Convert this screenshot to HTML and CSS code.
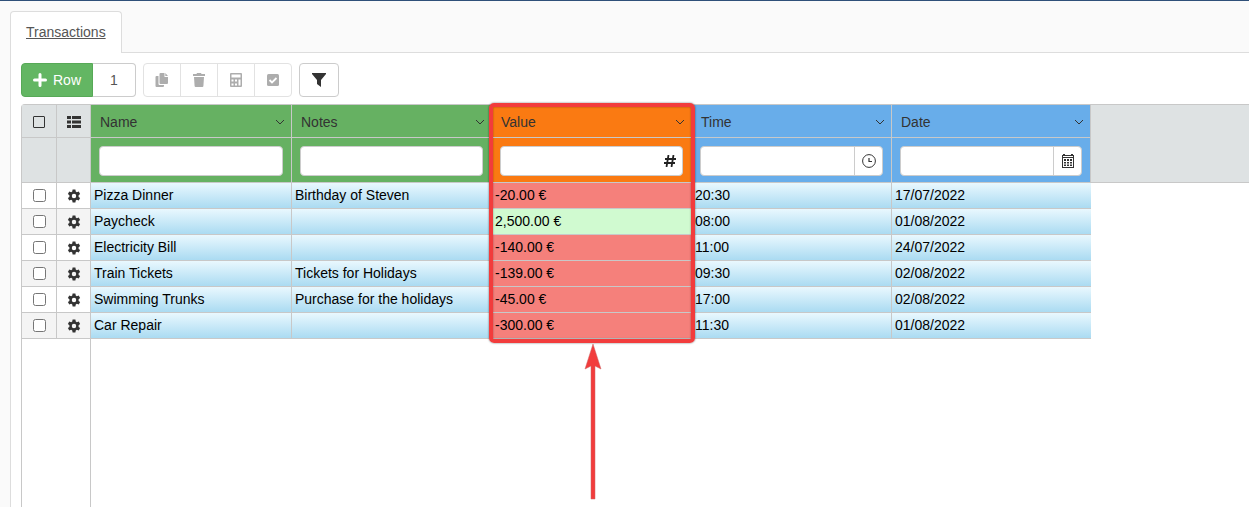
FILE: index.html
```html
<!DOCTYPE html>
<html lang="en">
<head>
  <meta charset="UTF-8">
  <title>Transactions</title>
  <link rel="stylesheet" href="styles.css">
</head>
<body>
  <svg class="defs" width="0" height="0">
    <symbol id="gear" viewBox="0 0 24 24">
      <path d="M9.600 1h4.800l.6 3.300 1.900 1.100 3.200-1.200 2.400 4.200-2.600 2.100v3l2.600 2.100-2.400 4.200-3.200-1.200-1.900 1.100-.6 3.300H9.600l-.6-3.300-1.900-1.100-3.200 1.200-2.400-4.200 2.600-2.100v-3L1.500 8.400l2.400-4.200 3.200 1.200L9 4.300zM12 8.200a3.800 3.800 0 1 0 0 7.600 3.800 3.800 0 0 0 0-7.600z" fill-rule="evenodd"/>
    </symbol>
    <symbol id="chevron" viewBox="0 0 10 6">
      <path d="M1 1l4 4 4-4" fill="none" stroke="currentColor"/>
    </symbol>
  </svg>

  <nav class="tabs">
    <a class="tab" href="#transactions">Transactions</a>
  </nav>

  <main class="panel" id="transactions">
    <div class="toolbar">
      <div class="group">
        <button class="btn add">
          <svg width="14" height="14" viewBox="0 0 14 14"><path d="M7 1.500v11M1.500 7h11" stroke="#fff" stroke-width="3" stroke-linecap="round"/></svg>
          Row
        </button>
        <input class="count" type="text" value="1" aria-label="Number of rows">
      </div>
      <div class="group">
        <button class="btn" disabled aria-label="Copy">
          <svg width="14" height="14" viewBox="0 0 14 14"><path d="M5.500 0H9.500v4H13v6q0 1-1 1H5.500q-1 0-1-1V1q0-1 1-1zM10.300 0L13 3h-2.700zM1.500 3h2v8q0 1 1 1H9v1q0 1-1 1H1.500q-1 0-1-1V4q0-1 1-1z"/></svg>
        </button>
        <button class="btn" disabled aria-label="Delete">
          <svg width="14" height="14" viewBox="0 0 14 14"><path d="M1 1h3.500l.5-1h4l.5 1H13v2H1zM2 4h10l-.6 9q-.1 1-1 1H3.600q-.9 0-1-1z"/></svg>
        </button>
        <button class="btn" disabled aria-label="Calculate">
          <svg width="14" height="14" viewBox="0 0 14 14"><path d="M2 0h10q1 0 1 1v12q0 1-1 1H2q-1 0-1-1V1q0-1 1-1zM2.500 1.500v3h9v-3zM2.500 6.500v2h2v-2zM6 6.500v2h2v-2zM9.500 6.500v6h2v-6zM2.500 10.500v2h2v-2zM6 10.500v2h2v-2z" fill-rule="evenodd"/></svg>
        </button>
        <button class="btn" disabled aria-label="Select">
          <svg width="14" height="14" viewBox="0 0 14 14"><rect x="1" y="1" width="12" height="12" rx="1.500"/><path d="M3.500 7l2.500 2.500L10.500 5" fill="none" stroke="#fff" stroke-width="1.800"/></svg>
        </button>
      </div>
      <div class="group">
        <button class="btn" aria-label="Filter">
          <svg width="14" height="14" viewBox="0 0 14 14"><path d="M0 0h14v1L9 7v7l-4-3V7L0 1z"/></svg>
        </button>
      </div>
    </div>

    <div class="grid">
      <table>
        <colgroup>
          <col class="col-check">
          <col class="col-gear">
          <col class="col-name">
          <col class="col-data">
          <col class="col-data">
          <col class="col-data">
          <col class="col-date">
          <col>
        </colgroup>
        <thead>
          <tr class="titles">
            <th class="tool"><input type="checkbox" class="check-all" aria-label="Select all"></th>
            <th class="tool">
              <svg width="14" height="12" viewBox="0 0 14 12"><path d="M0 0h4v3H0zM5 0h9v3H5zM0 4.500h4v3H0zM5 4.500h9v3H5zM0 9h4v3H0zM5 9h9v3H5z"/></svg>
            </th>
            <th class="green"><div class="title">Name <svg class="chevron"><use href="#chevron"/></svg></div></th>
            <th class="green"><div class="title">Notes <svg class="chevron"><use href="#chevron"/></svg></div></th>
            <th class="orange"><div class="title">Value <svg class="chevron"><use href="#chevron"/></svg></div></th>
            <th class="blue"><div class="title">Time <svg class="chevron"><use href="#chevron"/></svg></div></th>
            <th class="blue"><div class="title">Date <svg class="chevron"><use href="#chevron"/></svg></div></th>
            <th class="filler" rowspan="2"></th>
          </tr>
          <tr class="filters">
            <td class="tool"></td>
            <td class="tool"></td>
            <td class="green"><div class="filter"><input type="text" aria-label="Filter name"></div></td>
            <td class="green"><div class="filter"><input type="text" aria-label="Filter notes"></div></td>
            <td class="orange">
              <div class="filter">
                <input type="text" aria-label="Filter value">
                <span class="hash"><svg width="12" height="12" viewBox="0 0 12 12"><path d="M4.500 0l-2 12M9.500 0l-2 12M1 4h11M0 8h11" fill="none" stroke="#222" stroke-width="1.800"/></svg></span>
              </div>
            </td>
            <td class="blue">
              <div class="filter">
                <input type="text" aria-label="Filter time">
                <button class="pick" aria-label="Pick time"><svg width="14" height="14" viewBox="0 0 14 14"><path d="M7 4v3.500h3" fill="none" stroke="#333" stroke-width="1.200"/><circle cx="7" cy="7" r="6.400" fill="none" stroke="#333"/></svg></button>
              </div>
            </td>
            <td class="blue">
              <div class="filter">
                <input type="text" aria-label="Filter date">
                <button class="pick" aria-label="Pick date"><svg width="12" height="14" viewBox="0 0 12 14"><path d="M0 1h1V0h2v1h6V0h2v1h1v13H0zM1 4v9h10V4zM1 2v1h10V2z" fill-rule="evenodd"/><path d="M2 5h2v2H2zM5 5h2v2H5zM8 5h2v2H8zM2 8h2v1.500H2zM5 8h2v1.500H5zM8 8h2v1.500H8zM2 10.500h2V12H2zM5 10.500h2V12H5zM8 10.500h2V12H8z"/></svg></button>
              </div>
            </td>
          </tr>
        </thead>
        <tbody>
          <tr>
            <td class="tool"><input type="checkbox" aria-label="Select Pizza Dinner"></td>
            <td class="tool"><svg class="gear"><use href="#gear"/></svg></td>
            <td>Pizza Dinner</td><td>Birthday of Steven</td><td class="expense">-20.00 €</td><td>20:30</td><td class="date">17/07/2022</td>
            <td class="filler"></td>
          </tr>
          <tr>
            <td class="tool"><input type="checkbox" aria-label="Select Paycheck"></td>
            <td class="tool"><svg class="gear"><use href="#gear"/></svg></td>
            <td>Paycheck</td><td></td><td class="income">2,500.00 €</td><td>08:00</td><td class="date">01/08/2022</td>
            <td class="filler"></td>
          </tr>
          <tr>
            <td class="tool"><input type="checkbox" aria-label="Select Electricity Bill"></td>
            <td class="tool"><svg class="gear"><use href="#gear"/></svg></td>
            <td>Electricity Bill</td><td></td><td class="expense">-140.00 €</td><td>11:00</td><td class="date">24/07/2022</td>
            <td class="filler"></td>
          </tr>
          <tr>
            <td class="tool"><input type="checkbox" aria-label="Select Train Tickets"></td>
            <td class="tool"><svg class="gear"><use href="#gear"/></svg></td>
            <td>Train Tickets</td><td>Tickets for Holidays</td><td class="expense">-139.00 €</td><td>09:30</td><td class="date">02/08/2022</td>
            <td class="filler"></td>
          </tr>
          <tr>
            <td class="tool"><input type="checkbox" aria-label="Select Swimming Trunks"></td>
            <td class="tool"><svg class="gear"><use href="#gear"/></svg></td>
            <td>Swimming Trunks</td><td>Purchase for the holidays</td><td class="expense">-45.00 €</td><td>17:00</td><td class="date">02/08/2022</td>
            <td class="filler"></td>
          </tr>
          <tr>
            <td class="tool"><input type="checkbox" aria-label="Select Car Repair"></td>
            <td class="tool"><svg class="gear"><use href="#gear"/></svg></td>
            <td>Car Repair</td><td></td><td class="expense">-300.00 €</td><td>11:30</td><td class="date">01/08/2022</td>
            <td class="filler"></td>
          </tr>
        </tbody>
      </table>
      <div class="empty"></div>

      <!-- marks the value column -->
      <div class="marker"></div>
      <svg class="arrow" width="18" height="156" viewBox="0 0 18 156">
        <path d="M9 0l8 25-6-3v133H7V22l-6 3z" fill="#f23c3c" stroke="#c66" stroke-width=".5"/>
      </svg>
    </div>
  </main>
</body>
</html>
```

FILE: styles.css
```css
* { box-sizing: border-box; }
body {
  margin: 0;
  min-height: 100vh;
  padding-left: 10px;
  display: flex;
  flex-direction: column;
  font-family: "Liberation Sans", Arial, sans-serif;
  font-size: 14px;
  color: #333;
  background: #fafafa;
  border-top: 1px solid #2f5079;
}
button, input {
  font: inherit;
  color: inherit;
}
svg {
  display: block;
  fill: currentColor;
}
.defs {
  position: absolute;
}

/* tabs */
.tabs {
  display: flex;
  padding-top: 10px;
}
.tab {
  height: 42px;
  padding: 0 15px;
  line-height: 40px;
  margin-bottom: -1px;
  color: #555;
  background: #fff;
  border: 1px solid #ddd;
  border-bottom: none;
  border-radius: 4px 4px 0 0;
  position: relative;
}
.panel {
  flex: 1;
  display: flex;
  flex-direction: column;
  padding: 10px 0 0 10px;
  background: #fff;
  border-top: 1px solid #ddd;
  border-left: 1px solid #ddd;
}

/* toolbar */
.toolbar {
  display: flex;
  gap: 7px;
  margin-bottom: 7px;
}
.group {
  display: flex;
}
.btn {
  display: flex;
  align-items: center;
  gap: 6px;
  height: 34px;
  padding: 0 11px;
  background: #fff;
  border: 1px solid #ccc;
}
.btn + .btn {
  margin-left: -1px;
}
.btn:first-child {
  border-radius: 4px 0 0 4px;
}
.btn:last-child {
  border-radius: 0 4px 4px 0;
}
.btn:only-child {
  padding: 0 12px;
  border-radius: 4px;
}
.btn:disabled {
  color: #adadad;
  border-color: #e2e2e2;
}
.btn.add {
  padding: 0 11px;
  color: #fff;
  background: #63b663;
  border-color: #57a957;
}
.count {
  width: 43px;
  height: 34px;
  padding: 0;
  text-align: center;
  color: #555;
  border: 1px solid #ccc;
  border-left: none;
  border-radius: 0 4px 4px 0;
}

/* grid */
.grid {
  flex: 1;
  display: flex;
  flex-direction: column;
  position: relative;
  border-left: 1px solid #c8c8c8;
  border-top: 1px solid #c8c8c8;
  border-radius: 4px 0 0 0;
}
table {
  width: 100%;
  table-layout: fixed;
  border-collapse: separate;
  border-spacing: 0;
}
.col-check { width: 35px; }
.col-gear { width: 34px; }
.col-name { width: 201px; }
.col-data { width: 200px; }
.col-date { width: 199px; }
th, td {
  padding: 0;
  border-right: 1px solid #c8c8c8;
  border-bottom: 1px solid #c8c8c8;
  font-weight: normal;
  text-align: left;
}
.titles { height: 33px; }
.filters { height: 45px; }
.titles th,
.filters td {
  padding-top: 2px;
}
thead .tool,
thead .filler {
  background: #dee2e3;
}
thead .filler {
  border-right: none;
}
.green { background: #66b162; }
.orange { background: #fa7a12; }
.blue { background: #68adea; }
.title {
  display: flex;
  align-items: center;
  justify-content: space-between;
  padding: 0 6px 0 9px;
}
.chevron {
  width: 10px;
  height: 6px;
}
.filter {
  display: flex;
  height: 30px;
  margin: 0 8px;
  background: #fff;
  border: 1px solid #ccc;
  border-radius: 4px;
}
.filter input {
  flex: 1;
  min-width: 0;
  padding: 0 8px;
  background: none;
  border: none;
}
.hash,
.pick {
  display: flex;
  align-items: center;
  justify-content: center;
  width: 28px;
  padding: 0;
  background: none;
  border: none;
}
.hash {
  width: 24px;
}
.pick {
  border-left: 1px solid #ccc;
}
.tool svg,
.tool input {
  display: block;
  margin: 0 auto;
}
.check-all {
  appearance: none;
  width: 12px;
  height: 12px;
  border: 1px solid #333;
  border-radius: 1px;
}
.gear {
  width: 14px;
  height: 14px;
}
tbody tr {
  height: 26px;
}
tbody td {
  padding: 0 0 2px 3px;
  color: #000;
  background: linear-gradient(#e9f8fe, #abdbf2);
}
tbody .tool {
  padding: 0;
  color: #333;
  background: #fff;
}
tbody tr:nth-child(even) .tool {
  background: #f4f4f4;
}
tbody .expense { background: #f5807b; }
tbody .income { background: #d0fad0; }
tbody .date {
  border-right: none;
}
tbody .filler {
  background: none;
  border: none;
}
.empty {
  flex: 1;
  width: 69px;
  border-right: 1px solid #c8c8c8;
}

/* highlight over the value column */
.marker {
  position: absolute;
  top: -2px;
  left: 467px;
  width: 206px;
  height: 240px;
  border: 4px solid #f23c3c;
  border-radius: 5px;
  box-shadow: 0 0 2px rgba(0, 0, 0, 0.6), inset 0 0 2px rgba(0, 0, 0, 0.4);
}
.arrow {
  position: absolute;
  top: 239px;
  left: 562px;
}
```
